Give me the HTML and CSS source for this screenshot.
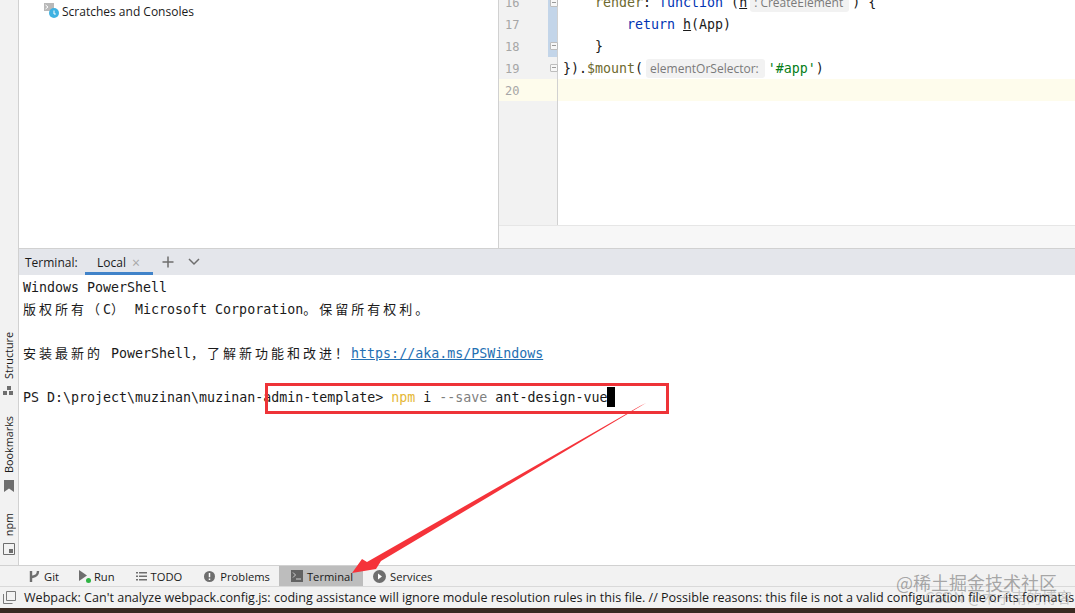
FILE: index.html
```html
<!DOCTYPE html>
<html lang="en">
<head>
    <meta charset="UTF-8">
    <title>Terminal - muzinan-admin-template</title>
    <link rel="stylesheet" href="styles.css">
</head>
<body>
    <div class="ide">
        <div class="workspace">
            <!-- Left tool window strip -->
            <div class="side-strip">
                <div class="side-tool">
                    <span class="side-label">Structure</span>
                    <svg class="side-icon" width="12" height="9" viewBox="0 0 12 9"><path d="M4 0h4v4H4zM0 5h4v4H0zM6 5h4v4H6z" fill="#6e6e6e"/></svg>
                </div>
                <div class="side-tool">
                    <span class="side-label">Bookmarks</span>
                    <svg class="side-icon" width="10" height="12" viewBox="0 0 10 12"><path d="M0 0h10v12L5 8.500 0 12z" fill="#6e6e6e"/></svg>
                </div>
                <div class="side-tool">
                    <span class="side-label">npm</span>
                    <svg class="side-icon" width="12" height="12" viewBox="0 0 12 12"><path d="M.5.5h11v11H.5z" fill="none" stroke="#6e6e6e"/><path d="M6 6h4v4H6z" fill="#6e6e6e"/></svg>
                </div>
            </div>

            <div class="main">
                <div class="top-split">
                    <!-- Project tree -->
                    <div class="project-pane">
                        <div class="tree-row">
                            <svg width="20" height="20" viewBox="0 0 20 20">
                                <path d="M0 0h10v8H0z" fill="#b9b9b9"/>
                                <path d="M1.500 2l2.500 2-2.500 2" fill="none" stroke="#fff"/>
                                <circle cx="10" cy="10" r="5" fill="#3fb2e2"/>
                                <path d="M10 7.500V11h1.800" fill="none" stroke="#fff"/>
                            </svg>
                            <span>Scratches and Consoles</span>
                        </div>
                    </div>

                    <!-- Editor -->
                    <div class="editor-pane">
                        <div class="editor-body">
                            <div class="gutter">
                                <div class="line-no">16</div>
                                <div class="line-no">17</div>
                                <div class="line-no">18</div>
                                <div class="line-no">19</div>
                                <div class="line-no current">20</div>
                                <div class="change-mark"></div>
                                <div class="fold fold-a"></div>
                                <div class="fold fold-b"></div>
                                <div class="fold fold-c"></div>
                            </div>
                            <div class="code">
                                <div class="code-line indent-1"><span class="prop">render</span>: <span class="kw">function</span> (<u>h</u><span class="hint">: CreateElement</span>) {</div>
                                <div class="code-line indent-2"><span class="kw">return</span> <u>h</u>(App)</div>
                                <div class="code-line indent-1">}</div>
                                <div class="code-line">}).<span class="prop">$mount</span>(<span class="hint">elementOrSelector:</span><span class="str">'#app'</span>)</div>
                                <div class="code-line current"></div>
                            </div>
                        </div>
                        <div class="editor-footer"></div>
                    </div>
                </div>

                <!-- Terminal tool window -->
                <div class="term-header">
                    <span class="term-title">Terminal:</span>
                    <div class="term-tab">
                        <span>Local</span>
                        <span class="tab-close">&times;</span>
                    </div>
                    <svg class="term-btn" width="12" height="12" viewBox="0 0 12 12"><path d="M6 .5v11M.5 6h11" stroke="#6e6e6e" stroke-width="1.500"/></svg>
                    <svg class="term-btn" width="12" height="8" viewBox="0 0 12 8"><path d="M1 1l5 5 5-5" fill="none" stroke="#6e6e6e" stroke-width="1.500"/></svg>
                </div>
                <div class="term-body">
                    <div class="term-line">Windows PowerShell</div>
                    <div class="term-line"><span class="cjk">版权所有（</span>C<span class="cjk">）</span> Microsoft Corporation<span class="cjk">。保留所有权利。</span></div>
                    <div class="term-line"></div>
                    <div class="term-line"><span class="cjk">安装最新的</span> PowerShell<span class="cjk">，了解新功能和改进！</span><a class="term-link">https://aka.ms/PSWindows</a></div>
                    <div class="term-line"></div>
                    <div class="term-line">PS D:\project\muzinan\muzinan-admin-template&gt; <span class="cmd">npm</span> i <span class="opt">--save</span> ant-design-vue<span class="cursor"></span></div>
                </div>
            </div>
        </div>

        <!-- Bottom tool buttons -->
        <div class="tool-bar">
            <div class="tool tool-git">
                <svg width="11" height="13" viewBox="0 0 11 13"><path d="M2 1v11M9 1c0 4-2 5-6 6" fill="none" stroke="#6e6e6e" stroke-width="2.400"/></svg>
                <span>Git</span>
            </div>
            <div class="tool tool-run">
                <svg width="12" height="13" viewBox="0 0 12 13"><path d="M0 0l8 5.500L0 11z" fill="#6e6e6e"/><circle cx="9.500" cy="10.500" r="2.500" fill="#2fb344"/></svg>
                <span>Run</span>
            </div>
            <div class="tool tool-todo">
                <svg width="11" height="9" viewBox="0 0 11 9"><path d="M0 0h2v1.500H0zM3 0h8v1.500H3zM0 3.500h2V5H0zM3 3.500h8V5H3zM0 7h2v1.500H0zM3 7h8v1.500H3z" fill="#6e6e6e"/></svg>
                <span>TODO</span>
            </div>
            <div class="tool tool-problems">
                <svg width="11" height="11" viewBox="0 0 11 11"><circle cx="5.500" cy="5.500" r="5.500" fill="#6e6e6e"/><path d="M5.500 2v4.200M5.500 7.500v1.500" stroke="#fff" stroke-width="1.500"/></svg>
                <span>Problems</span>
            </div>
            <div class="tool tool-terminal">
                <svg width="12" height="12" viewBox="0 0 12 12"><path d="M0 0h12v12H0z" fill="#626262"/><path d="M2 2.500l2.500 2.500L2 7.500M5 9h5" fill="none" stroke="#cfcfcf"/></svg>
                <span>Terminal</span>
            </div>
            <div class="tool tool-services">
                <svg width="13" height="13" viewBox="0 0 13 13"><circle cx="6.500" cy="6.500" r="6.500" fill="#6e6e6e"/><path d="M5 3.500l4 3-4 3z" fill="#fff"/></svg>
                <span>Services</span>
            </div>
        </div>

        <!-- Status bar -->
        <div class="status-bar">
            <svg width="13" height="13" viewBox="0 0 13 13"><path d="M3.500.5h9v9h-9z" fill="none" stroke="#7a7a7a"/><path d="M.5 3v9.500h9" fill="none" stroke="#7a7a7a"/></svg>
            <span class="status-text">Webpack: Can't analyze webpack.config.js: coding assistance will ignore module resolution rules in this file. // Possible reasons: this file is not a valid configuration file or its format is not recognized</span>
        </div>
        <div class="desktop-strip"></div>
    </div>

    <!-- Red annotation drawn over the screenshot -->
    <div class="note-box"></div>
    <svg class="note-arrow" width="1075" height="613" viewBox="0 0 1075 613">
        <path d="M352 573L362 559 367 562 640 406 646 403 381 561 376 569Z" fill="#f5333a"/>
    </svg>

    <!-- Watermarks -->
    <div class="mark mark-top">@稀土掘金技术社区</div>
    <div class="mark mark-bottom">CSDN @木子南的博客</div>
</body>
</html>
```

FILE: styles.css
```css
/* Overall page */
html, body {
    margin: 0;
    height: 100%;
    overflow: hidden;
}

body {
    position: relative;
    background-color: #fff;
    color: #1a1a1a;
    font-family: "Open Sans", "Noto Sans", sans-serif;
    font-size: 12px;
}

.ide {
    display: flex;
    flex-direction: column;
    height: 613px;
}

.workspace {
    display: flex;
    height: 565px;
}

/* Left tool window strip */
.side-strip {
    width: 19px;
    flex: none;
    display: flex;
    flex-direction: column;
    justify-content: flex-end;
    align-items: center;
    gap: 21px;
    padding-bottom: 10px;
    box-sizing: border-box;
    background-color: #f2f2f2;
    border-right: 1px solid #d1d1d1;
}

.side-tool {
    display: flex;
    flex-direction: column;
    align-items: center;
    gap: 7px;
}

.side-label {
    writing-mode: vertical-rl;
    transform: rotate(180deg);
    line-height: 14px;
    font-size: 10.8px;
}

.main {
    flex: 1;
    min-width: 0;
    display: flex;
    flex-direction: column;
}

.top-split {
    display: flex;
    height: 248px;
    flex: none;
}

/* Project tree */
.project-pane {
    width: 479px;
    flex: none;
    border-right: 1px solid #d1d1d1;
}

.tree-row {
    display: flex;
    align-items: center;
    gap: 1px;
    height: 20px;
    margin-top: 1px;
    padding-left: 25px;
    font-size: 12px;
}

.tree-row svg {
    margin-top: 4px;
    margin-right: -3px;
}

/* Editor */
.editor-pane {
    flex: 1;
    display: flex;
    flex-direction: column;
    min-width: 0;
}

.editor-body {
    display: flex;
    height: 225px;
    overflow: hidden;
}

.editor-footer {
    flex: 1;
    background-color: #f7f7f7;
    border-top: 1px solid #e6e6e6;
}

.gutter {
    position: relative;
    width: 58px;
    flex: none;
    background-color: #f2f2f2;
    border-right: 1px solid #d1d1d1;
}

.line-no {
    height: 22px;
    line-height: 24px;
    padding-left: 6px;
    color: #a6a6a6;
    font-family: "DejaVu Sans Mono", monospace;
    font-size: 12px;
}

.line-no:first-child {
    margin-top: -9px;
}

.line-no.current {
    background-color: #fefcec;
}

.change-mark {
    position: absolute;
    top: 0;
    left: 49px;
    width: 9px;
    height: 57px;
    background-color: #c3d5e9;
}

.fold {
    position: absolute;
    left: 51px;
    width: 6px;
    height: 6px;
    background-color: #f7f7f7;
    border: 1px solid #bdbdbd;
    border-radius: 1px;
}

.fold::after {
    content: "";
    display: block;
    margin: 2px 1px 0;
    height: 1px;
    background-color: #9a9a9a;
}

.fold-a { top: -1px; }
.fold-b { top: 42px; }
.fold-c { top: 64px; }

.code {
    flex: 1;
    min-width: 0;
    font-family: "DejaVu Sans Mono", monospace;
    font-size: 13.3px;
}

.code-line {
    height: 22px;
    line-height: 24px;
    padding-left: 5px;
    white-space: pre;
}

.code-line:first-child {
    margin-top: -9px;
}

.code-line.current {
    background-color: #fefcec;
}

.indent-1 { padding-left: 37px; }
.indent-2 { padding-left: 69px; }

.kw { color: #0033b3; }
.prop { color: #6e6a2e; }
.str { color: #067d17; }

.hint {
    margin: 0 3px;
    padding: 1px 6px 1px 4px;
    border-radius: 3px;
    background-color: #f2f2f2;
    color: #7a7a7a;
    font-family: "Open Sans", sans-serif;
    font-size: 12px;
}

/* Terminal */
.term-header {
    display: flex;
    align-items: center;
    height: 27px;
    flex: none;
    box-sizing: border-box;
    padding-left: 6px;
    background-color: #e4e6eb;
    border-top: 1px solid #d1d1d1;
    font-size: 12px;
}

.term-title {
    width: 60px;
}

.term-tab {
    display: flex;
    align-items: center;
    gap: 6px;
    align-self: stretch;
    box-sizing: border-box;
    width: 68px;
    padding: 3px 0 0 12px;
    border-bottom: 3px solid #4083c9;
}

.tab-close {
    color: #a8a8a8;
    font-size: 14px;
}

.term-btn {
    margin-left: 9px;
    margin-right: 5px;
}

.term-body {
    flex: 1;
    padding-left: 4px;
    font-family: "DejaVu Sans Mono", monospace;
    font-size: 13.3px;
    border-top: 1px solid #fff;
}

.term-line {
    height: 22px;
    line-height: 24px;
    white-space: pre;
}

.cjk {
    font-family: "Noto Sans CJK SC", sans-serif;
    font-size: 13px;
    line-height: 1;
    letter-spacing: 3px;
}

.term-link {
    color: #2470b3;
    text-decoration: underline;
}

.cmd { color: #e5b735; }
.opt { color: #7f7f7f; }

.cursor {
    display: inline-block;
    width: 8px;
    height: 20px;
    vertical-align: -5px;
    background-color: #000;
}

/* Bottom tool buttons */
.tool-bar {
    display: flex;
    height: 22px;
    flex: none;
    box-sizing: border-box;
    background-color: #f2f2f2;
    border-top: 1px solid #d1d1d1;
    border-bottom: 1px solid #d9d9d9;
}

.tool {
    display: flex;
    align-items: center;
    gap: 4px;
    font-size: 11.2px;
}

.tool-git { margin-left: 29px; }
.tool-run { margin-left: 20px; gap: 3px; }
.tool-todo { margin-left: 21px; }
.tool-problems { margin-left: 22px; gap: 5px; }
.tool-terminal { margin-left: 9px; padding: 0 10px 0 12px; background-color: #bdbdbd; }
.tool-services { margin-left: 10px; }

/* Status bar */
.status-bar {
    display: flex;
    align-items: center;
    gap: 8px;
    height: 21px;
    flex: none;
    padding-left: 3px;
    background-color: #f2f2f2;
    font-size: 12.55px;
    white-space: nowrap;
    overflow: hidden;
}

.status-bar svg,
.status-text {
    flex: none;
}

.desktop-strip {
    flex: 1;
    background-color: #3a2a22;
}

/* Red annotation */
.note-box {
    position: absolute;
    left: 265px;
    top: 383px;
    width: 398px;
    height: 25px;
    border: 3px solid #ee3338;
}

.note-arrow {
    position: absolute;
    left: 0;
    top: 0;
    pointer-events: none;
}

/* Watermarks */
.mark {
    position: absolute;
    color: rgba(90, 90, 90, 0.5);
    white-space: nowrap;
    font-family: "Noto Sans CJK SC", sans-serif;
}

.mark-top {
    left: 896px;
    top: 570px;
    font-size: 18px;
    line-height: 24px;
}

.mark-bottom {
    left: 925px;
    top: 587px;
    font-size: 15px;
    line-height: 20px;
    color: rgba(90, 90, 90, 0.3);
}
```
